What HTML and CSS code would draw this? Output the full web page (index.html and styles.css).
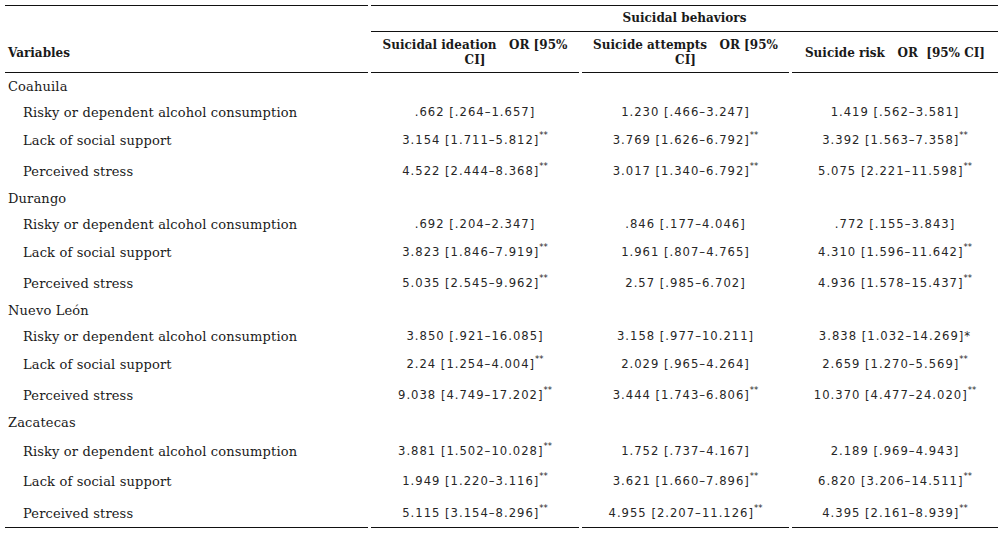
FILE: index.html
```html
<!DOCTYPE html>
<html>
<head>
<meta charset="utf-8">
<link rel="stylesheet" href="styles.css">
</head>
<body>
<table class="tbl">
  <colgroup>
    <col class="c-var">
    <col class="c-v1">
    <col class="c-v2">
    <col class="c-v3">
  </colgroup>
  <thead>
    <tr class="hrow1">
      <th class="hv-top"></th>
      <th class="hgroup" colspan="3">Suicidal behaviors</th>
    </tr>
    <tr class="hrow2">
      <th class="hvar">Variables</th>
      <th class="hcol">Suicidal ideation &nbsp;&nbsp;OR [95% CI]</th>
      <th class="hcol">Suicide attempts &nbsp;&nbsp;OR [95% CI]</th>
      <th class="hcol">Suicide risk &nbsp;&nbsp;OR &nbsp;[95% CI]</th>
    </tr>
  </thead>
  <tbody>
    <tr class="h27"><td class="state">Coahuila</td><td></td><td></td><td></td></tr>
    <tr class="h26"><td class="sub">Risky or dependent alcohol consumption</td><td class="val">.662 [.264–1.657]</td><td class="val">1.230 [.466–3.247]</td><td class="val">1.419 [.562–3.581]</td></tr>
    <tr class="h28"><td class="sub">Lack of social support</td><td class="val">3.154 [1.711–5.812]<sup>**</sup></td><td class="val">3.769 [1.626–6.792]<sup>**</sup></td><td class="val">3.392 [1.563–7.358]<sup>**</sup></td></tr>
    <tr class="h31"><td class="sub">Perceived stress</td><td class="val">4.522 [2.444–8.368]<sup>**</sup></td><td class="val">3.017 [1.340–6.792]<sup>**</sup></td><td class="val">5.075 [2.221–11.598]<sup>**</sup></td></tr>

    <tr class="h27"><td class="state">Durango</td><td></td><td></td><td></td></tr>
    <tr class="h26"><td class="sub">Risky or dependent alcohol consumption</td><td class="val">.692 [.204–2.347]</td><td class="val">.846 [.177–4.046]</td><td class="val">.772 [.155–3.843]</td></tr>
    <tr class="h28"><td class="sub">Lack of social support</td><td class="val">3.823 [1.846–7.919]<sup>**</sup></td><td class="val">1.961 [.807–4.765]</td><td class="val">4.310 [1.596–11.642]<sup>**</sup></td></tr>
    <tr class="h31"><td class="sub">Perceived stress</td><td class="val">5.035 [2.545–9.962]<sup>**</sup></td><td class="val">2.57 [.985–6.702]</td><td class="val">4.936 [1.578–15.437]<sup>**</sup></td></tr>

    <tr class="h27"><td class="state">Nuevo León</td><td></td><td></td><td></td></tr>
    <tr class="h26"><td class="sub">Risky or dependent alcohol consumption</td><td class="val">3.850 [.921–16.085]</td><td class="val">3.158 [.977–10.211]</td><td class="val">3.838 [1.032–14.269]*</td></tr>
    <tr class="h28"><td class="sub">Lack of social support</td><td class="val">2.24 [1.254–4.004]<sup>**</sup></td><td class="val">2.029 [.965–4.264]</td><td class="val">2.659 [1.270–5.569]<sup>**</sup></td></tr>
    <tr class="h31"><td class="sub">Perceived stress</td><td class="val">9.038 [4.749–17.202]<sup>**</sup></td><td class="val">3.444 [1.743–6.806]<sup>**</sup></td><td class="val">10.370 [4.477–24.020]<sup>**</sup></td></tr>

    <tr class="h27"><td class="state">Zacatecas</td><td></td><td></td><td></td></tr>
    <tr class="h29"><td class="sub">Risky or dependent alcohol consumption</td><td class="val">3.881 [1.502–10.028]<sup>**</sup></td><td class="val">1.752 [.737–4.167]</td><td class="val">2.189 [.969–4.943]</td></tr>
    <tr class="h30"><td class="sub">Lack of social support</td><td class="val">1.949 [1.220–3.116]<sup>**</sup></td><td class="val">3.621 [1.660–7.896]<sup>**</sup></td><td class="val">6.820 [3.206–14.511]<sup>**</sup></td></tr>
    <tr class="h33 last"><td class="sub">Perceived stress</td><td class="val">5.115 [3.154–8.296]<sup>**</sup></td><td class="val">4.955 [2.207–11.126]<sup>**</sup></td><td class="val">4.395 [2.161–8.939]<sup>**</sup></td></tr>
  </tbody>
</table>
</body>
</html>
```

FILE: styles.css
```css
html, body {
  margin: 0;
  background: #ffffff;
}
body {
  padding: 5px 0 0 2px;
  color: #1a1a1a;
  font-family: "DejaVu Serif", serif;
}
.tbl {
  width: 999px;
  table-layout: fixed;
  border-collapse: separate;
  border-spacing: 3px 0;
}
.c-var { width: 363px; }
.c-v1 { width: 208px; }
.c-v2 { width: 207px; }
.c-v3 { width: 206px; }

th {
  font-family: "DejaVu Serif", serif;
  font-weight: bold;
  font-size: 12px;
  line-height: 15px;
  color: #1a1a1a;
  padding: 0;
}
.hrow1 { height: 27px; }
.hrow1 th { border-top: 1px solid #111; }
.hgroup {
  border-bottom: 1px solid #111;
  text-align: center;
  vertical-align: middle;
}
.hrow2 { height: 41px; }
.hrow2 th {
  border-bottom: 1px solid #111;
  vertical-align: middle;
  padding-top: 2px;
}
.hvar {
  text-align: left;
  padding-left: 3px;
}
.hcol {
  text-align: center;
  padding: 0 8px;
}

td {
  font-size: 13px;
  letter-spacing: 0.15px;
  line-height: 15px;
  padding: 0 0 6px 0;
  vertical-align: bottom;
  white-space: nowrap;
}
.state { padding-left: 3px; }
.sub { padding-left: 18px; }
.val {
  text-align: center;
  font-family: "DejaVu Sans", sans-serif;
  font-size: 11.6px;
  letter-spacing: 1px;
  color: #262626;
}
.val sup {
  font-size: 8.5px;
  letter-spacing: 0;
  vertical-align: 6px;
  line-height: 0;
  margin-left: 0;
}
.last td { border-bottom: 1px solid #111; }

.h26 { height: 26px; }
.h27 { height: 27px; }
.h28 { height: 28px; }
.h29 { height: 29px; }
.h30 { height: 30px; }
.h31 { height: 31px; }
.h33 { height: 33px; }
```
